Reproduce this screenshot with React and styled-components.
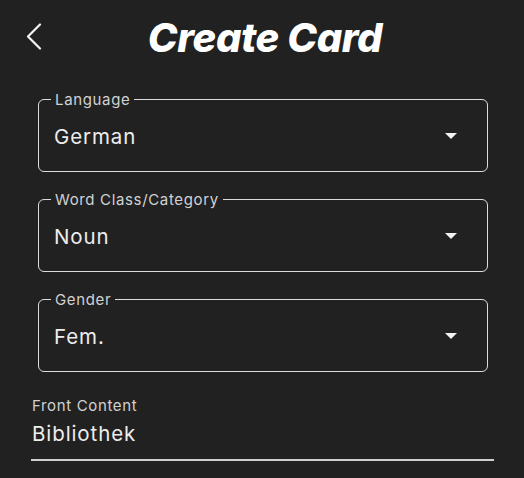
import React from "react";
import styled, { createGlobalStyle } from "styled-components";

const GlobalStyle = createGlobalStyle`
  html, body {
    margin: 0;
    background: #212121;
  }
  body {
    font-family: Inter, "Noto Sans", sans-serif;
    color: #ececec;
  }
`;

const Page = styled.div`
  width: 524px;
  min-height: 478px;
  background: #212121;
`;

const Header = styled.header`
  display: grid;
  grid-template-columns: 1fr auto 1fr;
  align-items: center;
  height: 72px;
  padding: 0 20px 0 26px;
  box-sizing: border-box;
`;

const BackButton = styled.button`
  justify-self: start;
  background: none;
  border: none;
  padding: 0;
  width: 20px;
  height: 30px;
  display: flex;
  align-items: center;
  cursor: pointer;
`;

const Title = styled.h1`
  margin: 0;
  font-family: Inter, "Noto Sans", sans-serif;
  font-size: 40px;
  font-weight: 800;
  font-style: italic;
  letter-spacing: -0.4px;
  color: #ffffff;
  padding-top: 3px;
`;

const Form = styled.form`
  display: flex;
  flex-direction: column;
  padding: 20px 30px 0 31px;
`;

const SelectBox = styled.fieldset`
  margin: 0 6px 20px 7px;
  padding: 0;
  border: 1.5px solid #dcdcdc;
  border-radius: 6px;
  min-width: 0;
`;

const Legend = styled.legend`
  margin-left: 12px;
  padding: 0 4px;
  font-size: 15px;
  line-height: 15px;
  letter-spacing: 0.65px;
  color: #d2d2d2;
`;

const SelectRow = styled.div`
  display: flex;
  align-items: center;
  justify-content: space-between;
  height: 64px;
  padding: 0 30px 6px 15px;
  box-sizing: border-box;
`;

const Value = styled.span`
  font-size: 20.5px;
  letter-spacing: 0.9px;
  color: #ededed;
`;

const Caret = styled.span`
  width: 0;
  height: 0;
  border-left: 6px solid transparent;
  border-right: 6px solid transparent;
  border-top: 6px solid #f2f2f2;
`;

const TextField = styled.div`
  display: flex;
  flex-direction: column;
  padding-top: 4px;
`;

const FieldLabel = styled.label`
  font-size: 15px;
  letter-spacing: 0.65px;
  color: #d2d2d2;
  padding-left: 1px;
`;

const Input = styled.input`
  background: none;
  border: none;
  border-bottom: 2px solid #d0d0d0;
  outline: none;
  padding: 6px 1px 13px;
  font-family: Inter, "Noto Sans", sans-serif;
  font-size: 20.5px;
  letter-spacing: 0.9px;
  color: #ededed;
`;

function Select({ label, value }) {
  return (
    <SelectBox>
      <Legend>{label}</Legend>
      <SelectRow>
        <Value>{value}</Value>
        <Caret />
      </SelectRow>
    </SelectBox>
  );
}

export default function App() {
  return (
    <Page>
      <GlobalStyle />
      <Header>
        <BackButton aria-label="back">
          <svg width="16" height="27" viewBox="0 0 16 27" fill="none">
            <path d="M14 1.5 L2 13.5 L14 25.5" stroke="#f2f2f2" strokeWidth="2.2" strokeLinecap="round" strokeLinejoin="round" />
          </svg>
        </BackButton>
        <Title>Create Card</Title>
        <span />
      </Header>
      <Form>
        <Select label="Language" value="German" />
        <Select label="Word Class/Category" value="Noun" />
        <Select label="Gender" value="Fem." />
        <TextField>
          <FieldLabel>Front Content</FieldLabel>
          <Input defaultValue="Bibliothek" />
        </TextField>
      </Form>
    </Page>
  );
}
